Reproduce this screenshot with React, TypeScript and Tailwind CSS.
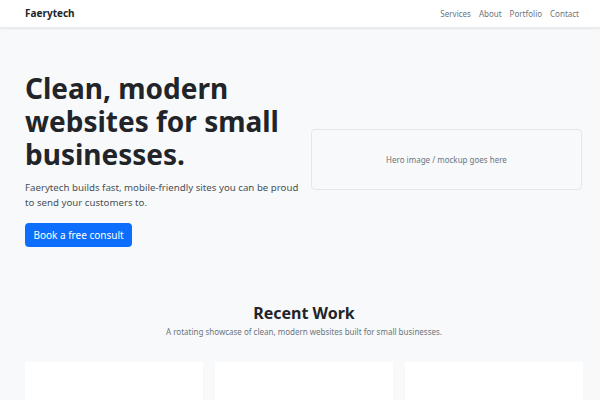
export default function App() {
  const links = ["Services", "About", "Portfolio", "Contact"]

  return (
    <div className="min-h-screen bg-[#f8f9fa] font-['Noto_Sans',sans-serif] text-[#212529]">
      <nav className="h-[28px] bg-white shadow-[0_1px_2px_rgba(0,0,0,0.08)] border-b border-[#e9ecef]">
        <div className="flex h-full items-center justify-between pl-[25px] pr-[21px]">
          <a className="text-[10px] font-bold text-[#212529]">Faerytech</a>
          <ul className="flex gap-[8px] text-[8px] text-[#6c757d]">
            {links.map((l) => (
              <li key={l}>{l}</li>
            ))}
          </ul>
        </div>
      </nav>

      <section className="pl-[25px] pr-[18px] pt-[44px]">
        <div className="flex items-center gap-[6px]">
          <div className="w-[280px] shrink-0">
            <h1 className="text-[28px] font-bold leading-[33px]">
              Clean, modern websites for small businesses.
            </h1>
            <p className="mt-[9px] text-[9.7px] leading-[15px] text-[#495057]">
              Faerytech builds fast, mobile-friendly sites you can be proud to send your customers to.
            </p>
            <button className="mt-[13px] h-[24px] w-[107px] rounded-[4px] bg-[#0d6efd] text-[10px] text-white">
              Book a free consult
            </button>
          </div>
          <div className="flex h-[61px] flex-1 items-center justify-center rounded-[4px] border border-[#e4e6e9] bg-[#f8f9fa] text-[8px] text-[#6c757d]">
            Hero image / mockup goes here
          </div>
        </div>
      </section>

      <section className="pt-[56px] pl-[25px] pr-[17px]">
        <h2 className="text-center text-[16px] font-bold leading-[20px]">Recent Work</h2>
        <p className="mt-[3px] text-center text-[8px] text-[#6c757d]">
          A rotating showcase of clean, modern websites built for small businesses.
        </p>
        <div className="mt-[24px] grid grid-cols-3 gap-[12px]">
          <div className="h-[120px] bg-white" />
          <div className="h-[120px] bg-white" />
          <div className="h-[120px] bg-white" />
        </div>
      </section>
    </div>
  )
}
